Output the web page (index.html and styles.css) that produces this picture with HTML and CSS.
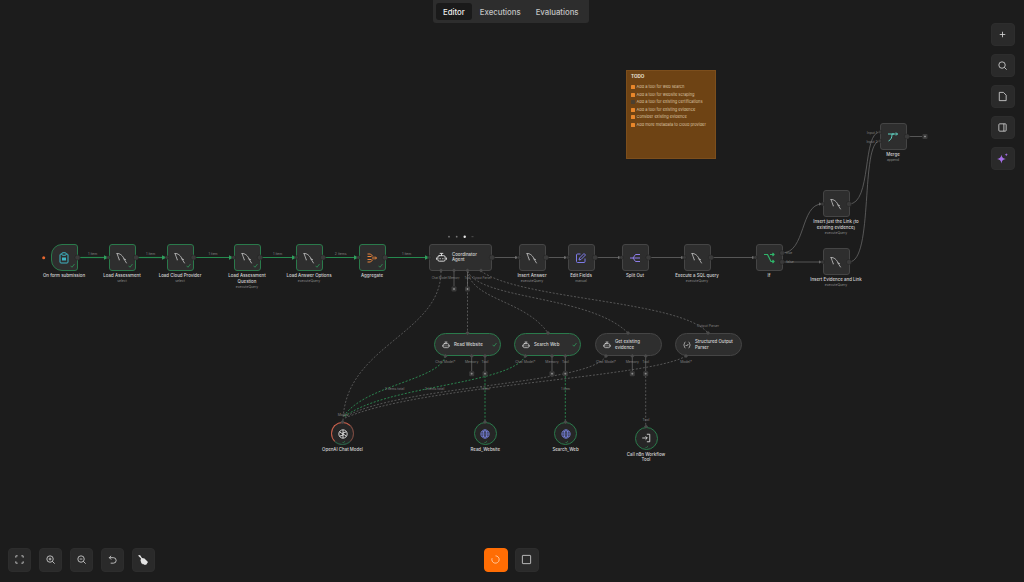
FILE: index.html
```html
<!DOCTYPE html>
<html lang="en">
<head>
  <meta charset="UTF-8">
  <meta name="viewport" content="width=device-width, initial-scale=1.0">
  <title>Workflow Editor</title>
  <link rel="stylesheet" href="styles.css">
</head>
<body>
  <svg class="defs" width="0" height="0">
    <defs>
      <marker id="arrow-green" markerWidth="4" markerHeight="4" refX="3.5" refY="2" orient="auto"><path d="M0 0L4 2L0 4Z" fill="#2f9e5c"/></marker>
      <marker id="arrow-grey" markerWidth="4" markerHeight="4" refX="3.5" refY="2" orient="auto"><path d="M0 0L4 2L0 4Z" fill="#777"/></marker>
      <symbol id="i-sql" viewBox="0 0 24 24"><path d="M2 3C8 2 14 8 16 14L21 22M2 3C3 7 5 10 6 14M16 14l3 1" fill="none" stroke="#d0d0d0" stroke-width="1.500" stroke-linecap="round" stroke-linejoin="round"/><circle cx="6.500" cy="15.500" r="1.200" fill="#d0d0d0"/></symbol>
      <symbol id="i-check" viewBox="0 0 10 10"><path d="M1 5.500L4 8.500L9 2" fill="none" stroke="#2f9e5c" stroke-width="1.500"/></symbol>
      <symbol id="i-robot" viewBox="0 0 24 24"><g fill="none" stroke="#e4e4e4" stroke-width="2" stroke-linecap="round"><rect x="4" y="8" width="16" height="12" rx="3"/><path d="M12 8V4M9 3h6M1 13v3M23 13v3M9 14v1M15 14v1"/></g></symbol>
      <symbol id="i-globe" viewBox="0 0 24 24"><g fill="none" stroke="#7f8cf0" stroke-width="1.800"><circle cx="12" cy="12" r="10"/><ellipse cx="12" cy="12" rx="4.500" ry="10"/><path d="M2 12h20M3.500 7h17M3.500 17h17"/></g></symbol>
    </defs>
  </svg>

  <div class="canvas">
    <svg class="edges" width="1024" height="582" viewBox="0 0 1024 582">
      <g class="line-green">
        <path d="M77 257.500H108" marker-end="url(#arrow-green)"/>
        <path d="M136 257.500H166" marker-end="url(#arrow-green)"/>
        <path d="M194 257.500H233" marker-end="url(#arrow-green)"/>
        <path d="M260 257.500H296" marker-end="url(#arrow-green)"/>
        <path d="M323 257.500H358" marker-end="url(#arrow-green)"/>
        <path d="M385 257.500H429" marker-end="url(#arrow-green)"/>
      </g>
      <g class="line-grey">
        <path d="M492 257.500H518" marker-end="url(#arrow-grey)"/>
        <path d="M546 257.500H567" marker-end="url(#arrow-grey)"/>
        <path d="M595 257.500H621" marker-end="url(#arrow-grey)"/>
        <path d="M648 257.500H684" marker-end="url(#arrow-grey)"/>
        <path d="M711 257.500H755" marker-end="url(#arrow-grey)"/>
        <path d="M782 253C806 253 800 204 822 204" marker-end="url(#arrow-grey)"/>
        <path d="M782 262H822" marker-end="url(#arrow-grey)"/>
        <path d="M849 204C872 204 862 132 880 132"/>
        <path d="M849 262C874 262 860 141 880 141"/>
        <path d="M907 136.500H922"/>
        <path d="M454 271V286M467.500 271V286M471.700 356V371M485 356V371M552 356V371M565.300 356V371M632.300 356V371M645.700 356V371"/>
      </g>
      <g class="dash-grey">
        <path d="M441 271C441 335 344 345 343 422"/>
        <path d="M467.500 271V333"/>
        <path d="M467.500 271C472 300 525 300 548 333"/>
        <path d="M467.500 271C480 300 590 295 628 333"/>
        <path d="M481 271C520 300 680 300 708 333"/>
        <path d="M606 356C590 385 400 385 345 417"/>
        <path d="M686 356C650 378 420 385 345 418"/>
        <path d="M645.700 376V427"/>
      </g>
      <g class="dash-green">
        <path d="M445.300 356C440 380 365 385 344 416"/>
        <path d="M525.300 356C510 385 385 385 344 417"/>
        <path d="M485 376V422"/>
        <path d="M565.300 376V422"/>
      </g>
      <g class="edge-labels">
        <text x="92.700" y="255">1 item</text>
        <text x="150.700" y="255">1 item</text>
        <text x="213" y="255">1 item</text>
        <text x="277.700" y="255">1 item</text>
        <text x="340.700" y="255">2 items</text>
        <text x="406.700" y="255">1 item</text>
        <text x="789" y="254">true</text>
        <text x="790" y="263">false</text>
        <text x="872" y="133.500">Input 1</text>
        <text x="872" y="142.500">Input 2</text>
        <text x="394.500" y="390">2 items total</text>
        <text x="434.500" y="390">2 items total</text>
        <text x="485" y="390">1 item</text>
        <text x="565.500" y="390">1 item</text>
        <text x="342.700" y="416">Model</text>
        <text x="646" y="421">Tool</text>
        <text x="708" y="327">Output Parser</text>
        <text class="tiny" x="439.500" y="278.500">Chat Model</text>
        <text class="tiny" x="454" y="278.500">Memory</text>
        <text class="tiny" x="467.500" y="278.500">Tool</text>
        <text class="tiny" x="482" y="278.500">Output Parser</text>
        <text x="445.300" y="363">Chat Model*</text>
        <text x="471.700" y="363">Memory</text>
        <text x="485" y="363">Tool</text>
        <text x="525.300" y="363">Chat Model*</text>
        <text x="552" y="363">Memory</text>
        <text x="565.300" y="363">Tool</text>
        <text x="606" y="363">Chat Model*</text>
        <text x="632.300" y="363">Memory</text>
        <text x="645.700" y="363">Tool</text>
        <text x="686" y="363">Model*</text>
      </g>
      <circle class="trigger-dot" cx="43.700" cy="257.700" r="1.500"/>
      <g class="pager">
        <circle cx="449" cy="236.700" r="0.900"/>
        <circle cx="456.700" cy="236.700" r="0.900"/>
        <circle class="pager-on" cx="464.700" cy="236.700" r="1.200"/>
        <path d="M471.500 236.700h2"/>
      </g>
    </svg>

    <div class="node n-form">
      <div class="box box-trigger ok">
        <svg class="icon" viewBox="0 0 24 24"><g fill="none" stroke="#3fb4c4" stroke-width="2"><rect x="4" y="4" width="16" height="18" rx="2"/><rect x="8" y="1.500" width="8" height="5" rx="1" fill="#2c2c2c"/><rect x="8" y="11" width="8" height="6" fill="#3fb4c4" stroke="none"/></g></svg>
        <svg class="check"><use href="#i-check"/></svg>
      </div>
      <p class="label">On form submission</p>
    </div>
    <div class="node n-load1">
      <div class="box ok"><svg class="icon"><use href="#i-sql"/></svg><svg class="check"><use href="#i-check"/></svg></div>
      <p class="label">Load Assessment</p><p class="sub">select</p>
    </div>
    <div class="node n-load2">
      <div class="box ok"><svg class="icon"><use href="#i-sql"/></svg><svg class="check"><use href="#i-check"/></svg></div>
      <p class="label">Load Cloud Provider</p><p class="sub">select</p>
    </div>
    <div class="node n-load3">
      <div class="box ok"><svg class="icon"><use href="#i-sql"/></svg><svg class="check"><use href="#i-check"/></svg></div>
      <p class="label">Load Assessment<br>Question</p><p class="sub">executeQuery</p>
    </div>
    <div class="node n-load4">
      <div class="box ok"><svg class="icon"><use href="#i-sql"/></svg><svg class="check"><use href="#i-check"/></svg></div>
      <p class="label">Load Answer Options</p><p class="sub">executeQuery</p>
    </div>
    <div class="node n-aggregate">
      <div class="box ok">
        <svg class="icon" viewBox="0 0 24 24"><path d="M3 4h6l5 5M3 9h8M3 15h8M3 20h6l5-5M12 12h9M18 9l3 3-3 3" fill="none" stroke="#e8833a" stroke-width="2"/></svg>
        <svg class="check"><use href="#i-check"/></svg>
      </div>
      <p class="label">Aggregate</p>
    </div>

    <div class="node-wide n-agent">
      <svg class="agent-icon"><use href="#i-robot"/></svg>
      <p class="agent-name">Coordinator<br>Agent</p>
    </div>

    <div class="node n-insert">
      <div class="box"><svg class="icon"><use href="#i-sql"/></svg></div>
      <p class="label">Insert Answer</p><p class="sub">executeQuery</p>
    </div>
    <div class="node n-edit">
      <div class="box">
        <svg class="icon" viewBox="0 0 24 24"><path d="M11 4H5a2 2 0 0 0-2 2v13a2 2 0 0 0 2 2h13a2 2 0 0 0 2-2v-6M18 3l3 3-9 9-4 1 1-4Z" fill="none" stroke="#7d7bea" stroke-width="2" stroke-linejoin="round"/></svg>
      </div>
      <p class="label">Edit Fields</p><p class="sub">manual</p>
    </div>
    <div class="node n-split">
      <div class="box">
        <svg class="icon" viewBox="0 0 24 24"><path d="M2 12h6l5-7h9M8 12h14M8 12l5 7h9" fill="none" stroke="#8d7de8" stroke-width="2"/></svg>
      </div>
      <p class="label">Split Out</p>
    </div>
    <div class="node n-execute">
      <div class="box"><svg class="icon"><use href="#i-sql"/></svg></div>
      <p class="label">Execute a SQL query</p><p class="sub">executeQuery</p>
    </div>
    <div class="node n-if">
      <div class="box">
        <svg class="icon" viewBox="0 0 24 24"><path d="M2 5h7l7 14h6M14 5h8M19 2l3 3-3 3M19 16l3 3-3 3" fill="none" stroke="#2fb56a" stroke-width="2.400"/></svg>
      </div>
      <p class="label">If</p>
    </div>
    <div class="node n-link">
      <div class="box"><svg class="icon"><use href="#i-sql"/></svg></div>
      <p class="label">Insert just the Link (to<br>existing evidence)</p><p class="sub">executeQuery</p>
    </div>
    <div class="node n-evidence">
      <div class="box"><svg class="icon"><use href="#i-sql"/></svg></div>
      <p class="label">Insert Evidence and Link</p><p class="sub">executeQuery</p>
    </div>
    <div class="node n-merge">
      <div class="box">
        <svg class="icon" viewBox="0 0 24 24"><path d="M2 6h12M10 6c0 6-1 11-7 14M10 6h11M18 3l3 3-3 3" fill="none" stroke="#5fd0c0" stroke-width="2"/></svg>
      </div>
      <p class="label">Merge</p><p class="sub">append</p>
    </div>

    <div class="pill ok n-read">
      <svg class="pill-icon"><use href="#i-robot"/></svg>
      <p class="pill-name">Read Website</p>
      <svg class="check"><use href="#i-check"/></svg>
    </div>
    <div class="pill ok n-search">
      <svg class="pill-icon"><use href="#i-robot"/></svg>
      <p class="pill-name">Search Web</p>
      <svg class="check"><use href="#i-check"/></svg>
    </div>
    <div class="pill n-existing">
      <svg class="pill-icon"><use href="#i-robot"/></svg>
      <p class="pill-name">Get existing<br>evidence</p>
    </div>
    <div class="pill n-parser">
      <svg class="pill-icon" viewBox="0 0 24 24"><path d="M7 3C4 3 5 10 2 12c3 2 2 9 5 9M17 3c3 0 2 7 5 9-3 2-2 9-5 9M8 12l3 3 5-6" fill="none" stroke="#e4e4e4" stroke-width="2"/></svg>
      <p class="pill-name">Structured Output<br>Parser</p>
    </div>

    <div class="node n-openai">
      <div class="disc disc-red">
        <svg class="disc-icon" viewBox="0 0 24 24"><g fill="none" stroke="#cfcfcf" stroke-width="2.400"><circle cx="12" cy="12" r="10"/><path d="M12 2v13l-8.600 2M12 22V9l8.600-2M3.400 7l11 6.500M20.600 17l-11-6.500"/></g></svg>
        <svg class="disc-check"><use href="#i-check"/></svg>
      </div>
      <p class="label">OpenAI Chat Model</p>
    </div>
    <div class="node n-tool-read">
      <div class="disc"><svg class="disc-icon"><use href="#i-globe"/></svg><svg class="disc-check"><use href="#i-check"/></svg></div>
      <p class="label">Read_Website</p>
    </div>
    <div class="node n-tool-search">
      <div class="disc"><svg class="disc-icon"><use href="#i-globe"/></svg><svg class="disc-check"><use href="#i-check"/></svg></div>
      <p class="label">Search_Web</p>
    </div>
    <div class="node n-tool-call">
      <div class="disc">
        <svg class="disc-icon" viewBox="0 0 24 24"><path d="M14 3h7v18h-7M3 12h12M11 8l4 4-4 4" fill="none" stroke="#e4e4e4" stroke-width="2"/></svg>
        <svg class="disc-check"><use href="#i-check"/></svg>
      </div>
      <p class="label">Call n8n Workflow<br>Tool</p>
    </div>

    <svg class="ports" width="1024" height="582" viewBox="0 0 1024 582">
      <g class="port">
        <circle cx="77.500" cy="257.500" r="2.600"/>
        <circle cx="108.500" cy="257.500" r="1.800"/><circle cx="136" cy="257.500" r="2.600"/>
        <circle cx="167" cy="257.500" r="1.800"/><circle cx="193.500" cy="257.500" r="2.600"/>
        <circle cx="233.500" cy="257.500" r="1.800"/><circle cx="260" cy="257.500" r="2.600"/>
        <circle cx="296.500" cy="257.500" r="1.800"/><circle cx="323" cy="257.500" r="2.600"/>
        <circle cx="358.500" cy="257.500" r="1.800"/><circle cx="385" cy="257.500" r="2.600"/>
        <circle cx="429.500" cy="257.500" r="1.800"/><circle cx="492" cy="257.500" r="2.600"/>
        <circle cx="519" cy="257.500" r="1.800"/><circle cx="546" cy="257.500" r="2.600"/>
        <circle cx="568" cy="257.500" r="1.800"/><circle cx="595" cy="257.500" r="2.600"/>
        <circle cx="621.500" cy="257.500" r="1.800"/><circle cx="648.500" cy="257.500" r="2.600"/>
        <circle cx="684.500" cy="257.500" r="1.800"/><circle cx="711" cy="257.500" r="2.600"/>
        <circle cx="755.500" cy="257.500" r="1.800"/>
        <circle cx="782" cy="253" r="2.400"/><circle cx="782" cy="262" r="2.400"/>
        <circle cx="822.500" cy="204" r="1.800"/><circle cx="849" cy="204" r="2.600"/>
        <circle cx="822.500" cy="262" r="1.800"/><circle cx="849" cy="262" r="2.600"/>
        <circle cx="880" cy="132" r="1.800"/><circle cx="880" cy="141" r="1.800"/>
        <circle cx="907" cy="136.500" r="2.600"/>
      </g>
      <g class="port-small">
        <rect x="439.500" y="269" width="3" height="3" transform="rotate(45 441 270.500)"/>
        <rect x="452.500" y="269" width="3" height="3" transform="rotate(45 454 270.500)"/>
        <rect x="466" y="269" width="3" height="3" transform="rotate(45 467.500 270.500)"/>
        <rect x="479.500" y="269" width="3" height="3" transform="rotate(45 481 270.500)"/>
        <rect x="444" y="354.500" width="3" height="3" transform="rotate(45 445.500 356)"/>
        <rect x="470.200" y="354.500" width="3" height="3" transform="rotate(45 471.700 356)"/>
        <rect x="483.500" y="354.500" width="3" height="3" transform="rotate(45 485 356)"/>
        <rect x="524" y="354.500" width="3" height="3" transform="rotate(45 525.500 356)"/>
        <rect x="550.500" y="354.500" width="3" height="3" transform="rotate(45 552 356)"/>
        <rect x="563.800" y="354.500" width="3" height="3" transform="rotate(45 565.300 356)"/>
        <rect x="604.500" y="354.500" width="3" height="3" transform="rotate(45 606 356)"/>
        <rect x="630.800" y="354.500" width="3" height="3" transform="rotate(45 632.300 356)"/>
        <rect x="644.200" y="354.500" width="3" height="3" transform="rotate(45 645.700 356)"/>
        <rect x="684.500" y="354.500" width="3" height="3" transform="rotate(45 686 356)"/>
        <rect x="466" y="331.500" width="3" height="3" transform="rotate(45 467.500 333)"/>
        <rect x="546.500" y="331.500" width="3" height="3" transform="rotate(45 548 333)"/>
        <rect x="626.500" y="331.500" width="3" height="3" transform="rotate(45 628 333)"/>
        <rect x="706.500" y="331.500" width="3" height="3" transform="rotate(45 708 333)"/>
        <rect x="341" y="420.500" width="3" height="3" transform="rotate(45 342.500 422)"/>
        <rect x="483.500" y="420.500" width="3" height="3" transform="rotate(45 485 422)"/>
        <rect x="564" y="420.500" width="3" height="3" transform="rotate(45 565.500 422)"/>
        <rect x="644.500" y="425" width="3" height="3" transform="rotate(45 646 426.500)"/>
      </g>
      <g class="plus">
        <rect x="451.500" y="286.500" width="5" height="5" rx="1"/><path d="M453 289h2M454 288v2"/>
        <rect x="465" y="286.500" width="5" height="5" rx="1"/><path d="M466.500 289h2M467.500 288v2"/>
        <rect x="469.200" y="371.200" width="5" height="5" rx="1"/><path d="M470.700 373.700h2M471.700 372.700v2"/>
        <rect x="482.500" y="371.200" width="5" height="5" rx="1"/><path d="M484 373.700h2M485 372.700v2"/>
        <rect x="549.500" y="371.200" width="5" height="5" rx="1"/><path d="M551 373.700h2M552 372.700v2"/>
        <rect x="562.800" y="371.200" width="5" height="5" rx="1"/><path d="M564.300 373.700h2M565.300 372.700v2"/>
        <rect x="629.800" y="371.200" width="5" height="5" rx="1"/><path d="M631.300 373.700h2M632.300 372.700v2"/>
        <rect x="643.200" y="371.200" width="5" height="5" rx="1"/><path d="M644.700 373.700h2M645.700 372.700v2"/>
        <rect x="922.500" y="134" width="5" height="5" rx="1"/><path d="M924 136.500h2M925 135.500v2"/>
      </g>
    </svg>

    <div class="note">
      <h2 class="note-title">TODO</h2>
      <ul class="todo">
        <li><span class="tick"></span>Add a tool for web search</li>
        <li><span class="tick"></span>Add a tool for website scraping</li>
        <li><span class="tick tick-off"></span>Add a tool for existing certifications</li>
        <li><span class="tick"></span>Add a tool for existing evidence</li>
        <li><span class="tick"></span>Consider existing evidence</li>
        <li><span class="tick"></span>Add more metadata to cloud provider</li>
      </ul>
    </div>
  </div>

  <div class="tabs">
    <button class="tab tab-active">Editor</button>
    <button class="tab">Executions</button>
    <button class="tab">Evaluations</button>
  </div>

  <div class="side-tools">
    <button class="tool"><svg viewBox="0 0 24 24"><path d="M12 6v12M6 12h12"/></svg></button>
    <button class="tool"><svg viewBox="0 0 24 24"><circle cx="11" cy="11" r="7"/><path d="M16 16l5 5"/></svg></button>
    <button class="tool"><svg viewBox="0 0 24 24"><path d="M5 3h9l6 6v12H5Z"/></svg></button>
    <button class="tool"><svg viewBox="0 0 24 24"><rect x="4" y="4" width="16" height="16" rx="2"/><path d="M15 4v16"/></svg></button>
    <button class="tool"><svg class="spark" viewBox="0 0 24 24"><path d="M10 5c1 5 3 7 8 8-5 1-7 3-8 8-1-5-3-7-8-8 5-1 7-3 8-8Z"/><path d="M19 2c.4 2 1 2.700 3 3-2 .4-2.600 1-3 3-.4-2-1-2.600-3-3 2-.3 2.600-1 3-3Z"/></svg></button>
  </div>

  <div class="bottom-left">
    <button class="tool"><svg viewBox="0 0 24 24"><path d="M4 8V4h4M16 4h4v4M20 16v4h-4M8 20H4v-4"/></svg></button>
    <button class="tool"><svg viewBox="0 0 24 24"><circle cx="11" cy="11" r="7"/><path d="M16 16l5 5M8 11h6M11 8v6"/></svg></button>
    <button class="tool"><svg viewBox="0 0 24 24"><circle cx="11" cy="11" r="7"/><path d="M16 16l5 5M8 11h6"/></svg></button>
    <button class="tool"><svg viewBox="0 0 24 24"><path d="M9 4L5 8l4 4M5 8h9a5 5 0 0 1 0 12H8"/></svg></button>
    <button class="tool"><svg class="broom" viewBox="0 0 24 24"><path d="M2 3l4-1 4 6 5 1 7 7-4 6-2-1-1 1-2-2-1 1-2-2-1 0-2-6 1-4-1-1Z"/></svg></button>
  </div>

  <div class="bottom-center">
    <button class="tool tool-run"><svg viewBox="0 0 24 24"><path d="M12 4a8 8 0 1 1-7.500 5.200"/></svg></button>
    <button class="tool"><svg viewBox="0 0 24 24"><rect x="3" y="3" width="18" height="18" rx="1"/></svg></button>
  </div>
</body>
</html>
```

FILE: styles.css
```css
* {
  margin: 0;
  padding: 0;
  box-sizing: border-box;
}
body {
  width: 1024px;
  height: 582px;
  overflow: hidden;
  background: #1c1c1c;
  font-family: Inter, 'Liberation Sans', sans-serif;
  position: relative;
}
.defs {
  position: absolute;
}
.canvas {
  position: absolute;
  inset: 0;
}
.edges, .ports {
  position: absolute;
  left: 0;
  top: 0;
}
.ports {
  pointer-events: none;
}
.edges path {
  fill: none;
}
.line-green path {
  stroke: #25894e;
  stroke-width: 1.200;
}
.line-grey path {
  stroke: #666;
  stroke-width: 0.8;
}
.dash-grey path {
  stroke: #6f6f6f;
  stroke-width: 0.7;
  stroke-dasharray: 2 1.600;
}
.dash-green path {
  stroke: #2e9e5b;
  stroke-width: 0.8;
  stroke-dasharray: 2 1.600;
}
.edge-labels text {
  font-size: 3.400px;
  fill: #808080;
  text-anchor: middle;
}
.edge-labels .tiny {
  font-size: 2.900px;
}
.trigger-dot {
  fill: #e8662e;
}
.pager circle {
  fill: #777;
}
.pager .pager-on {
  fill: #e8e8e8;
}
.pager path {
  stroke: #666;
  stroke-width: 0.7;
}
.port circle {
  fill: #3a3a3a;
  stroke: #1c1c1c;
  stroke-width: 0.4;
}
.port-small rect {
  fill: #4a4a4a;
}
.plus rect {
  fill: #3a3a3a;
}
.plus path {
  stroke: #bbb;
  stroke-width: 0.5;
  fill: none;
}

/* nodes */
.node {
  position: absolute;
  top: 244px;
  width: 70px;
  display: flex;
  flex-direction: column;
  align-items: center;
  text-align: center;
}
.box {
  position: relative;
  width: 27px;
  height: 27px;
  flex: none;
  background: #2e2e2e;
  border: 1px solid #454545;
  border-radius: 3px;
  display: flex;
  align-items: center;
  justify-content: center;
}
.box.ok {
  border-color: #2a7a4b;
}
.box-trigger {
  border-radius: 11px 3px 3px 11px;
}
.icon {
  width: 12px;
  height: 12px;
}
.check {
  position: absolute;
  right: 2px;
  bottom: 2px;
  width: 5px;
  height: 5px;
}
.label {
  margin-top: 2px;
  font-size: 4.400px;
  line-height: 5.800px;
  font-weight: 500;
  color: #d6d6d6;
  white-space: nowrap;
}
.sub {
  margin-top: 0.5px;
  font-size: 3.400px;
  line-height: 5.800px;
  color: #8a8a8a;
  white-space: nowrap;
}
.n-form { left: 29px; }
.n-load1 { left: 87px; }
.n-load2 { left: 145px; }
.n-load3 { left: 212px; }
.n-load4 { left: 274px; }
.n-aggregate { left: 337px; }
.n-insert { left: 497px; }
.n-edit { left: 546px; }
.n-split { left: 600px; }
.n-execute { left: 662px; }
.n-if { left: 734px; }
.n-link { left: 801px; top: 190px; }
.n-evidence { left: 801px; top: 248px; }
.n-merge { left: 858px; top: 123px; }

.node-wide {
  position: absolute;
  left: 429px;
  top: 244px;
  width: 63px;
  height: 26.500px;
  background: #2e2e2e;
  border: 1px solid #454545;
  border-radius: 3px;
  display: flex;
  align-items: center;
  gap: 5px;
  padding-left: 6px;
}
.agent-icon {
  width: 11px;
  height: 11px;
}
.agent-name, .pill-name {
  font-size: 4.400px;
  line-height: 5.600px;
  font-weight: 500;
  color: #d6d6d6;
  white-space: nowrap;
}

.pill {
  position: absolute;
  top: 333px;
  width: 66.500px;
  height: 23px;
  background: #2e2e2e;
  border: 1px solid #454545;
  border-radius: 12px;
  display: flex;
  align-items: center;
  gap: 4px;
  padding-left: 7px;
}
.pill.ok {
  border-color: #2a7a4b;
}
.pill-icon {
  width: 8px;
  height: 8px;
  flex: none;
}
.pill .check {
  right: 3px;
  bottom: 8px;
  width: 5px;
  height: 5px;
}
.n-read { left: 434px; }
.n-search { left: 514px; }
.n-existing { left: 595px; }
.n-parser { left: 675px; }

.disc {
  position: relative;
  width: 23px;
  height: 23px;
  flex: none;
  background: #262626;
  border: 1px solid #2a7a4b;
  border-radius: 50%;
  display: flex;
  align-items: center;
  justify-content: center;
}
.disc-red {
  border-color: #c8604c #7a4a40 #2a5a44 #c8604c;
}
.disc-icon {
  width: 10px;
  height: 10px;
}
.disc-check {
  position: absolute;
  left: 9.500px;
  bottom: 0.5px;
  width: 3.500px;
  height: 3.500px;
}
.n-openai { left: 307.500px; top: 422px; }
.n-tool-read { left: 450.300px; top: 422px; }
.n-tool-search { left: 530.500px; top: 422px; }
.n-tool-call { left: 611px; top: 426.500px; }

/* sticky note */
.note {
  position: absolute;
  left: 626px;
  top: 70px;
  width: 90px;
  height: 89px;
  background: #6e4314;
  border: 1px solid #7c4e1c;
  padding: 3px 4px;
}
.note-title {
  font-size: 4.600px;
  line-height: 6px;
  font-weight: 700;
  color: #e8e0d4;
  margin-bottom: 4px;
}
.todo {
  list-style: none;
  display: flex;
  flex-direction: column;
  gap: 1.600px;
}
.todo li {
  display: flex;
  align-items: center;
  gap: 1.500px;
  font-size: 3.950px;
  line-height: 6px;
  color: #dcc4a4;
  white-space: nowrap;
}
.tick {
  width: 4px;
  height: 4px;
  background: #e8862a;
  border-radius: 0.5px;
  flex: none;
}
.tick-off {
  background: #4c4030;
}

/* toolbars */
.tabs {
  position: absolute;
  left: 433px;
  top: 0;
  width: 156px;
  height: 23px;
  background: #2d2d2d;
  border-radius: 0 0 3px 3px;
  display: flex;
  align-items: center;
  padding: 0 3px;
  gap: 1px;
}
.tab {
  border: none;
  background: none;
  font-family: inherit;
  font-size: 7.800px;
  font-weight: 500;
  color: #c4c4c4;
  height: 17px;
  padding: 0 7px;
  border-radius: 3px;
}
.tab-active {
  background: #1a1a1a;
  color: #eeeeee;
}
.side-tools {
  position: absolute;
  left: 991px;
  top: 22.500px;
  display: flex;
  flex-direction: column;
  gap: 7.500px;
}
.bottom-left {
  position: absolute;
  left: 7.500px;
  top: 548px;
  display: flex;
  gap: 7.500px;
}
.bottom-center {
  position: absolute;
  left: 484px;
  top: 548px;
  display: flex;
  gap: 7.500px;
}
.tool {
  width: 23.500px;
  height: 23.500px;
  background: #2a2a2a;
  border: 1px solid #2d2d2d;
  border-radius: 4px;
  display: flex;
  align-items: center;
  justify-content: center;
}
.tool svg {
  width: 11px;
  height: 11px;
  fill: none;
  stroke: #d6d6d6;
  stroke-width: 1.800;
}
.tool .spark {
  width: 13px;
  height: 13px;
  fill: #a56fe8;
  stroke: none;
}
.tool .broom {
  width: 12px;
  height: 12px;
  fill: #e4e4e4;
  stroke: none;
}
.tool-run {
  background: #ff6d04;
  border-color: #ff6d04;
}
.tool-run svg {
  stroke: #ffd8b8;
}
```
